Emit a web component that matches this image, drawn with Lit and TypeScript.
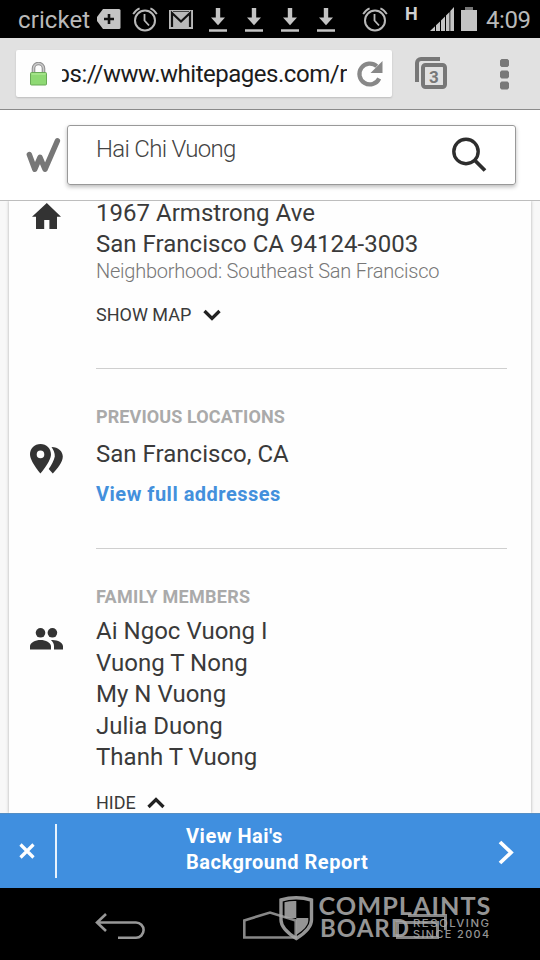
import { LitElement, html, css, svg } from "lit";
import { customElement } from "lit/decorators.js";

const alarm = html`<svg class="alarm" viewBox="0 0 26 26" width="26" height="26">
  <g fill="none" stroke="#b9b9b9" stroke-width="2">
    <circle cx="13" cy="14.500" r="10" />
    <path d="M12.500 8v6.500l4.500 5" stroke-width="1.8" />
    <path d="M1.200 8.200Q3.400 4 7.600 2.400M24.800 8.200Q22.600 4 18.400 2.400" stroke-width="1.8" />
  </g>
</svg>`;

const download = html`<svg class="download" viewBox="0 0 18 26" width="18" height="26">
  <path fill="#c4c4c4" d="M6.800 1h4.400v9.500H16L9 18.300 2 10.500h4.800zM0 22.300h18v2.500H0z" />
</svg>`;

@customElement("status-bar")
export class StatusBar extends LitElement {
  static styles = css`
    :host { display: flex; height: 38px; background: #000; color: #b9b9b9; align-items: center; font: 24px/38px Roboto, "Noto Sans", sans-serif; }
    svg { flex: none; display: block; }
    .carrier { width: 79px; margin: 2px 0 0 18px; letter-spacing: 0.1px; white-space: nowrap; flex: none; }
    .alarm { margin-left: 11px; }
    .gmail { margin: 0 7px 0 11px; }
    .download { margin: 2px 9px 0; }
    .late { margin: 0 0 0 18px; }
    .late .alarm { margin: 0; }
    .net { font: bold 18px/20px Roboto, sans-serif; align-self: flex-start; margin: 4px 0 0 17px; width: 13px; color: #d0d0d0; }
    .signal { margin-left: 12px; }
    .battery { margin: 0 0 0 7px; }
    .clock { margin: 2px 0 0 9px; letter-spacing: -0.4px; white-space: nowrap; }
  `;
  render() {
    return html`
      <span class="carrier">cricket</span>
      <svg viewBox="0 0 24 20" width="24" height="20"><path fill="#c4c4c4" d="M6 0h16q1.500 0 1.500 1.500v17q0 1.500-1.500 1.500H6L0 12V8z" /><path stroke="#111" stroke-width="2.600" d="M7 10h10M12 5v10" /></svg>
      ${alarm}
      <svg class="gmail" viewBox="0 0 24 19" width="24" height="19"><path fill="#b9b9b9" d="M0 0h24v19H0z" /><path fill="none" stroke="#111" stroke-width="2.200" d="M3 17V3l9 8.500L21 3v14" /><path fill="none" stroke="#444" d="M4 1.500h16" /></svg>
      ${download}${download}${download}${download}
      <span class="late">${alarm}</span>
      <span class="net">H</span>
      <svg class="signal" viewBox="0 0 24 24" width="24" height="24"><path fill="#c4c4c4" d="M0 24l5-4.800V24zM6 18.300l4-3.900V24H6zM11 13.400l4-4V24h-4zM16 8.400l3.500-3.500V24H16zM20.300 4L24 0v24h-3.700z" /></svg>
      <svg class="battery" viewBox="0 0 16 24" width="16" height="24"><path fill="#c4c4c4" d="M0 3h16v21H0z" /><path fill="#777" d="M4 0h8v3H4z" /></svg>
      <span class="clock">4:09</span>
    `;
  }
}

@customElement("browser-bar")
export class BrowserBar extends LitElement {
  static styles = css`
    :host { display: flex; height: 72px; box-sizing: border-box; background: #e1e1e1; border-bottom: 1px solid #8b8b8b; padding-top: 12px; align-items: flex-start; font-family: Roboto, "Noto Sans", sans-serif; }
    svg { display: block; flex: none; }
    .box { display: flex; align-items: center; margin-left: 16px; width: 376px; height: 47px; background: #fefefe; border-radius: 2px; box-shadow: 0 1px 2px #bbb; }
    .lock { margin-left: 13px; }
    .url { margin-left: 14px; width: 285px; overflow: hidden; display: flex; font-size: 24px; line-height: 34px; color: #1c1c1c; letter-spacing: -0.48px; white-space: nowrap; }
    .scrolled { margin-left: -5.500px; }
    .reload { margin-left: 9px; }
    .tabs { margin: 7px 0 0 23px; }
    .more { margin: 9px 0 0 52.500px; }
  `;
  render() {
    return html`
      <div class="box">
        <svg class="lock" viewBox="0 0 19 24" width="19" height="24">
          <path d="M4.500 12V6.500a5 5 0 0 1 10 0V12" fill="none" stroke="#929292" stroke-width="3.600" />
          <path d="M4.500 12V6.500a5 5 0 0 1 10 0V12" fill="none" stroke="#ccc" stroke-width="1.400" />
          <rect x="1.500" y="10.500" width="16" height="12.500" rx="1" fill="#8ed973" stroke="#69a957" />
          <path d="M2.500 12h14" stroke="#b9ee9f" />
        </svg>
        <div class="url"><span class="scrolled">ps://www.whitepages.com/r</span></div>
        <svg class="reload" viewBox="0 0 28 28" width="28" height="28"><path d="M23.200 18.500A10.400 10.400 0 1 1 20.800 6.300" fill="none" stroke="#888" stroke-width="4.200" /><path fill="#888" d="M26.500 1v12H14.500z" /></svg>
      </div>
      <svg class="tabs" viewBox="0 0 32 33" width="32" height="33">
        <path d="M2 25V6a4 4 0 0 1 4-4h19" fill="none" stroke="#777" stroke-width="4" />
        <rect x="8" y="8" width="22" height="22" rx="2.500" fill="#e1e1e1" stroke="#777" stroke-width="4" />
        <text x="19" y="25.500" text-anchor="middle" font-size="17" font-weight="700" fill="#777">3</text>
      </svg>
      <svg class="more" viewBox="0 0 9 31" width="9" height="31"><path fill="#777" d="M1.500 0h6L9 1.500v5L7.500 8h-6L0 6.500v-5zM1.500 11.500h6L9 13v5l-1.500 1.500h-6L0 18v-5zM1.500 22.500h6L9 24v5l-1.500 1.500h-6L0 29v-5z" /></svg>
    `;
  }
}

@customElement("search-header")
export class SearchHeader extends LitElement {
  static styles = css`
    :host { display: flex; height: 91px; box-sizing: border-box; background: #fff; border-bottom: 1px solid #bdbdbd; font-family: Roboto, "Noto Sans", sans-serif; }
    .logo { margin: 27px 0 0 26px; flex: none; }
    .field { display: flex; box-sizing: border-box; margin: 15px 0 0 6px; width: 449px; height: 60px; border: 1px solid #999; border-radius: 3px; box-shadow: 0 2px 4px #bbb; }
    .query { padding-left: 28px; width: 356px; font-size: 24px; font-weight: 300; line-height: 46px; color: #444; white-space: nowrap; letter-spacing: -0.7px; }
    .find { margin-top: 11px; flex: none; }
  `;
  render() {
    return html`
      <svg class="logo" viewBox="0 0 35 36" width="35" height="36"><path d="M3.300 17.500L8.800 32.300l5.200-12 5 12L31.400 3.800" fill="none" stroke="#777" stroke-width="5.400" stroke-linecap="round" stroke-linejoin="round" /></svg>
      <div class="field">
        <span class="query">Hai Chi Vuong</span>
        <svg class="find" viewBox="0 0 36 36" width="36" height="36"><circle cx="14" cy="14.500" r="12.200" fill="none" stroke="#2d2d2d" stroke-width="3.400" /><path d="M22.500 23L33 33.500" stroke="#2d2d2d" stroke-width="3.800" /></svg>
      </div>
    `;
  }
}

const house = svg`<path fill="#333" d="M0 13.700L14.800 0 29 13.700h-4V26h-7.600v-9h-5.200v9H4V13.700z"/>`;

@customElement("person-details")
export class PersonDetails extends LitElement {
  static styles = css`
    :host { display: block; height: 612px; overflow: hidden; background: #f8f8f8; font-family: Roboto, "Noto Sans", sans-serif; color: #3a3a3a; }
    .card { margin: 0 9px; width: 522px; height: 612px; background: #fefefe; box-shadow: 0 0 3px #aaa; }
    .row { display: grid; grid-template-columns: 87px 411px; box-sizing: border-box; }
    .current { height: 168px; }
    .previous { height: 180px; }
    .body { border-bottom: 1px solid #cfcfcf; white-space: nowrap; box-sizing: border-box; }
    .family .body { border: 0; }
    .address { margin-top: -3.500px; }
    .previous .body, .family .body { padding-top: 37px; }
    .line { font-size: 24px; line-height: 31.5px; letter-spacing: 0.02px; }
    .address .line { line-height: 31px; }
    .area { font-size: 20px; line-height: 24px; font-weight: 300; color: #777; margin-top: -0.500px; letter-spacing: -0.23px; }
    .toggle { display: flex; align-items: center; font-size: 18px; line-height: 22px; }
    .map { margin-top: 21px; }
    .label { font-size: 18px; line-height: 22px; font-weight: 700; color: #aaa; letter-spacing: 0.1px; }
    .family .label { letter-spacing: 0.3px; }
    .places { margin-top: 11px; }
    .link { font-size: 20px; line-height: 24px; font-weight: 700; color: #4390dc; margin-top: 11px; letter-spacing: 0.49px; }
    .names { margin-top: 8px; }
    .hide { margin-top: 18.500px; }
    .chevron { margin-left: 12px; }
    .hide .chevron { margin-left: 11px; }
    .home { margin: 2px 0 0 23px; }
    .pins { margin: 75px 0 0 21px; }
    .people { margin: 79px 0 0 21px; }
  `;
  render() {
    const names = ["Ai Ngoc Vuong I", "Vuong T Nong", "My N Vuong", "Julia Duong", "Thanh T Vuong"];
    return html`
      <div class="card">
        <section class="row current">
          <svg class="home" viewBox="0 0 29 26" width="29" height="26">${house}</svg>
          <div class="body">
            <div class="address"><div class="line"><span>1967 Armstrong Ave</span></div><div class="line"><span>San Francisco CA 94124-3003</span></div></div>
            <div class="area"><span>Neighborhood: Southeast San Francisco</span></div>
            <div class="toggle map"><span>SHOW MAP</span><svg class="chevron" viewBox="0 0 18 12" width="18" height="12"><path d="M1.500 2l7.500 7.500L16.500 2" fill="none" stroke="#222" stroke-width="3.300" /></svg></div>
          </div>
        </section>
        <section class="row previous">
          <svg class="pins" viewBox="0 0 33 30" width="33" height="30"><path fill="#333" fill-rule="evenodd" d="M10.500 0C4.500 0 0 4.500 0 10.300 0 17.500 10.500 29.500 10.500 29.500S21 17.500 21 10.300C21 4.500 16.500 0 10.500 0zM10.500 6.600a3.800 3.800 0 1 1 0 7.600 3.800 3.800 0 0 1 0-7.600z" /><path fill="#333" d="M21.500 3C28.500 3 32.800 7.600 32.800 12.500 32.800 18.500 27 25 22.800 29.500L18.700 25C21.500 21 24 16.500 24.800 12.500 25 9 23.500 6 21.500 3z" /></svg>
          <div class="body">
            <div class="label"><span>PREVIOUS LOCATIONS</span></div>
            <div class="line places"><span>San Francisco, CA</span></div>
            <div class="link"><span>View full addresses</span></div>
          </div>
        </section>
        <section class="row family">
          <svg class="people" viewBox="0 0 33 22" width="33" height="22"><g fill="#333"><circle cx="10.500" cy="4.800" r="4.800" /><circle cx="22.400" cy="4.800" r="4.800" /><path d="M0 21.500v-3.200C0 14.500 5.500 12 10.500 12S21 14.500 21 18.300v3.200zM21 12.200c5.500-.7 12 2.300 12 6.100v3.200h-9v-3.200c0-2.500-1-4.500-3-6.100z" /></g></svg>
          <div class="body">
            <div class="label"><span>FAMILY MEMBERS</span></div>
            <div class="names">${names.map((n) => html`<div class="line"><span>${n}</span></div>`)}</div>
            <div class="toggle hide"><span>HIDE</span><svg class="chevron" viewBox="0 0 18 12" width="18" height="12"><path d="M1.500 10L9 2.500l7.500 7.500" fill="none" stroke="#222" stroke-width="3.300" /></svg></div>
          </div>
        </section>
      </div>
    `;
  }
}

@customElement("report-banner")
export class ReportBanner extends LitElement {
  static styles = css`
    :host { display: flex; height: 75px; box-sizing: border-box; background: #408fdf; border-top: 1px solid #548ec4; color: #fff; font: 700 20px/26px Roboto, "Noto Sans", sans-serif; }
    svg { display: block; flex: none; }
    .close { margin: 29px 0 0 19px; }
    .rule { width: 2px; height: 54px; margin: 10px 0 0 20px; background: #e8f3fd; }
    .text { margin: 9px 0 0 129px; width: 312px; white-space: nowrap; letter-spacing: 0.52px; }
    .go { margin-top: 26px; }
  `;
  render() {
    return html`
      <svg class="close" viewBox="0 0 16 16" width="16" height="16"><path d="M1.500 1.500l13 13M14.500 1.500l-13 13" stroke="#fff" stroke-width="3.200" /></svg>
      <div class="rule"></div>
      <div class="text"><span>View Hai's</span><br /><span>Background Report</span></div>
      <svg class="go" viewBox="0 0 17 25" width="17" height="25"><path d="M2 2l11 10.500L2 23" fill="none" stroke="#fff" stroke-width="3.800" /></svg>
    `;
  }
}

@customElement("nav-bar")
export class NavBar extends LitElement {
  static styles = css`
    :host { display: flex; position: relative; height: 72px; background: #000; }
    svg { display: block; flex: none; }
    .back { margin: 25px 0 0 95px; }
    .home { margin: 23px 0 0 98px; }
    .recent { margin: 23px 0 0 99px; }
    .mark { position: absolute; left: 276px; top: 4px; }
    .big { font: 700 24.5px Lato, sans-serif; letter-spacing: 1px; }
    .small { font: 500 10px Inter, sans-serif; letter-spacing: 1.3px; }
  `;
  render() {
    return html`
      <svg class="back" viewBox="0 0 50 28" width="50" height="28"><path d="M11 1L2 9.500 11 18M2 9.500h39a7.500 7.500 0 0 1 0 15.200H23" fill="none" stroke="#989898" stroke-width="2.600" /></svg>
      <svg class="home" viewBox="0 0 54 28" width="54" height="28"><path d="M1.300 26.500V9.500L27 1.500l25.700 8v17z" fill="none" stroke="#878787" stroke-width="2.600" /></svg>
      <svg class="recent" viewBox="0 0 52 28" width="52" height="28"><path d="M1.500 11.500h40v15h-40zM12 4.500h37.500V19" fill="none" stroke="#878787" stroke-width="3" /></svg>
      <svg class="mark" viewBox="0 0 220 50" width="220" height="50" fill="#aaa" opacity=".88">
        <path d="M5 8Q20 3.500 35.500 8V28q0 9-15.200 18.500Q5 37 5 28z" fill="none" stroke="#aaa" stroke-width="3.400" />
        <path d="M20.300 9v17H8.500V10.300q6-1.700 11.800-1.300zM20.300 26h12v3q0 6-12 14z" />
        <text class="big" x="42.500" y="22.800" textLength="173" lengthAdjust="spacingAndGlyphs">COMPLAINTS</text>
        <text class="big" x="44" y="45.300" textLength="90" lengthAdjust="spacingAndGlyphs">BOARD</text>
        <text class="small" x="137" y="35" textLength="77.500" lengthAdjust="spacingAndGlyphs">RESOLVING</text>
        <text class="small" x="137" y="45.500" textLength="77.500" lengthAdjust="spacingAndGlyphs">SINCE 2004</text>
      </svg>
    `;
  }
}

@customElement("app-root")
export class AppRoot extends LitElement {
  static styles = css`
    :host { display: flex; flex-direction: column; width: 540px; height: 960px; overflow: hidden; background: #000; }
    :host > * { flex: none; }
  `;
  render() {
    return html`
      <status-bar></status-bar>
      <browser-bar></browser-bar>
      <search-header></search-header>
      <person-details></person-details>
      <report-banner></report-banner>
      <nav-bar></nav-bar>
    `;
  }
}
